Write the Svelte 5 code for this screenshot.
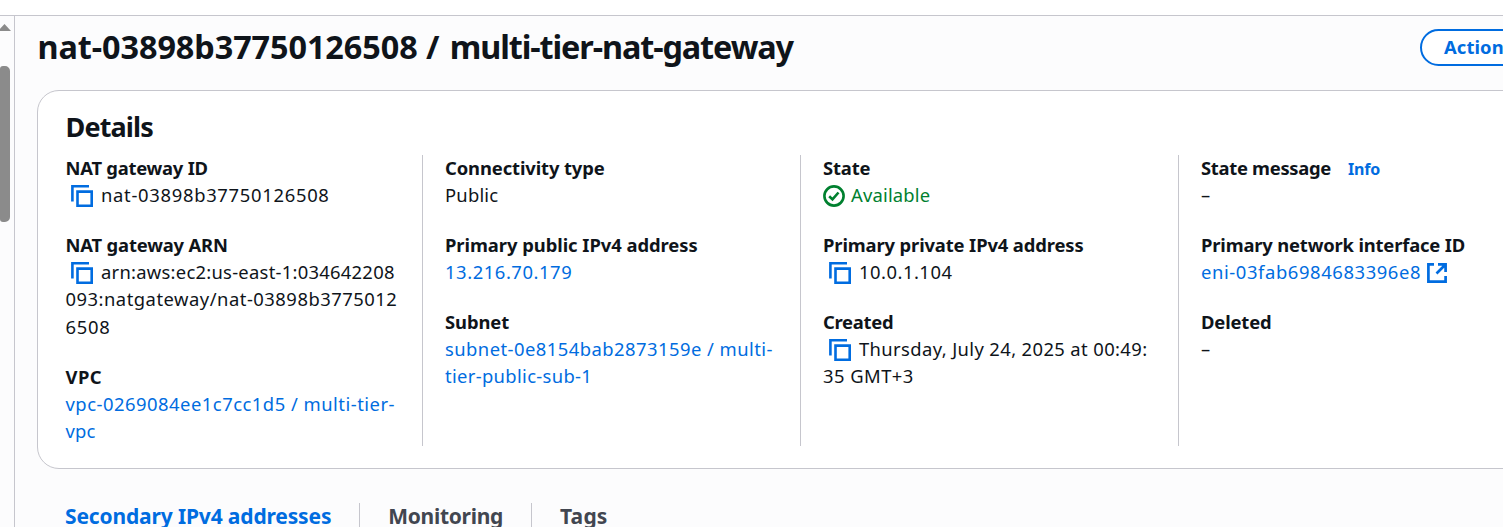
<script>
  // Each text is [content, letter-spacing in px].
  const columns = [
    [
      { label: ['NAT gateway ID', -0.24], icon: 'copy', lines: [['nat-03898b37750126508', 0.7]] },
      {
        label: ['NAT gateway ARN', -0.17],
        icon: 'copy',
        lines: [['arn:aws:ec2:us-east-1:034642208', 0.26], ['093:natgateway/nat-03898b3775012', 0.5], ['6508', 0.7]]
      },
      { label: ['VPC', 0.5], link: true, lines: [['vpc-0269084ee1c7cc1d5 / multi-tier-', 0.5], ['vpc', 0.2]] }
    ],
    [
      { label: ['Connectivity type', -0.11], lines: [['Public', 0.2]] },
      { label: ['Primary public IPv4 address', -0.05], link: true, lines: [['13.216.70.179', 0.56]] },
      { label: ['Subnet', -0.1], link: true, lines: [['subnet-0e8154bab2873159e / multi-', 0.46], ['tier-public-sub-1', 0.34]] }
    ],
    [
      { label: ['State', -0.16], icon: 'ok', lines: [['Available', 0.19]] },
      { label: ['Primary private IPv4 address', -0.13], icon: 'copy', lines: [['10.0.1.104', 0.5]] },
      { label: ['Created', -0.27], icon: 'copy', lines: [['Thursday, July 24, 2025 at 00:49:', 0.38], ['35 GMT+3', 0.45]] }
    ],
    [
      { label: ['State message', -0.3], info: true, lines: [['–', 0]] },
      { label: ['Primary network interface ID', -0.17], link: true, external: true, lines: [['eni-03fab6984683396e8', 0.6]] },
      { label: ['Deleted', -0.15], lines: [['–', 0]] }
    ]
  ];
  const tabs = [['Secondary IPv4 addresses', -0.15], ['Monitoring', -0.3], ['Tags', 0.2]];
</script>

<div class="page">
  <div class="topbar"></div>
  <div class="body">
    <aside>
      <svg class="arrow" width="11" height="7" viewBox="0 0 11 7"><path d="M-2 7 4.5 0 11 7z" fill="#8b8b8b" /></svg>
      <div class="thumb"></div>
    </aside>
    <main>
      <header>
        <h1><span class="id">nat-03898b37750126508 /</span> <span class="name">multi-tier-nat-gateway</span></h1>
        <button>Actions</button>
      </header>
      <section class="card">
        <h2>Details</h2>
        <div class="grid">
          {#each columns as col}
            <div class="col">
              {#each col as f}
                <div class="field">
                  <div class="label"><span style:letter-spacing="{f.label[1]}px">{f.label[0]}</span>{#if f.info}<span class="info">Info</span>{/if}</div>
                  {#each f.lines as line, i}
                    <div class="value" class:link={f.link} class:ok={f.icon === 'ok'}>
                      {#if i === 0 && f.icon === 'copy'}
                        <svg class="copy" width="22" height="22" viewBox="0 0 22 22" fill="none" stroke="#006ce0" stroke-width="2.6">
                          <path d="M1.4 16.4V1.3H18" /><path d="M6.5 6.6h14.2v14.1H6.5z" />
                        </svg>
                      {:else if i === 0 && f.icon === 'ok'}
                        <svg class="check" width="22" height="22" viewBox="0 0 22 22" fill="none" stroke="#00802f" stroke-width="2.6">
                          <circle cx="11" cy="11" r="9.6" /><path d="M6.2 11.2l3.3 3.2 6-6.9" />
                        </svg>
                      {/if}
                      <span style:letter-spacing="{line[1]}px">{line[0]}</span>
                      {#if f.external}
                        <svg class="ext" width="20" height="20" viewBox="0 0 20 20" fill="none" stroke="#006ce0" stroke-width="2.7">
                          <path d="M7 1.4H1.4v17.2h17.2V13" /><path d="M11 1.4h7.6V9M18.5 1.5 9.5 10.5" />
                        </svg>
                      {/if}
                    </div>
                  {/each}
                </div>
              {/each}
            </div>
          {/each}
        </div>
      </section>
      <nav>
        {#each tabs as t, i}
          <div class="tab" class:active={i === 0}><span style:letter-spacing="{t[1]}px">{t[0]}</span></div>
        {/each}
      </nav>
    </main>
  </div>
</div>

<style>
  :global(body) { overflow: hidden; }
  .page {
    width: 1503px; height: 527px; overflow: hidden; display: flex; flex-direction: column;
    background: #fcfcfd; color: #0f141a; font: 18.4px/27.5px 'Noto Sans', 'Open Sans', sans-serif;
    white-space: nowrap;
  }
  .topbar { height: 15px; flex: none; background: #fff; border-bottom: 1px solid #c6c6cd; }
  .body { flex: 1; display: flex; min-height: 0; }
  aside { width: 14px; flex: none; border-right: 1px solid #c6c6cd; display: flex; flex-direction: column; }
  .arrow { margin-top: 8px; flex: none; }
  .thumb { margin-top: 35px; width: 10px; height: 156px; background: #8b8b8b; border-radius: 3px 5px 5px 3px; flex: none; }
  main { flex: none; width: 1560px; padding-left: 22px; display: flex; flex-direction: column; }
  header { height: 74px; flex: none; display: flex; justify-content: space-between; }
  h1 { margin: 10px 0 0 0.5px; font-size: 32.4px; line-height: 41px; font-weight: 700; }
  .id { letter-spacing: -0.08px; }
  .name { letter-spacing: -1.1px; margin-left: 2px; }
  button {
    box-sizing: border-box; width: 150px; height: 37px; margin: 13px 27px 0 0; padding: 0 0 2px 22px; text-align: left;
    border: 2px solid #006ce0; border-radius: 19px; background: #fff; color: #006ce0;
    font: 700 18.4px/31px 'Noto Sans', sans-serif; letter-spacing: 0.1px;
  }
  .card {
    box-sizing: border-box; height: 379px; flex: none; border: 1px solid #c6c6cd; border-radius: 22px;
    background: #fff; padding: 19px 0 0;
  }
  h2 { margin: 0 0 12px 27.5px; font-size: 27px; line-height: 33px; font-weight: 700; letter-spacing: -0.85px; }
  .grid { display: flex; height: 291px; }
  .col { box-sizing: border-box; width: 378px; border-left: 1px solid #c6c6cd; padding-left: 22px; display: flex; flex-direction: column; gap: 22px; }
  .col:first-child { width: 384px; border: 0; padding-left: 27.5px; }
  .label, .value { height: 27.5px; display: flex; align-items: center; }
  .label { font-weight: 700; }
  .label span { margin-top: -2.5px; }
  .value span { margin-top: -3.5px; }
  .label .info { font-size: 16px; letter-spacing: -0.2px; color: #006ce0; margin: 1px 0 0 17px; }
  .link { color: #006ce0; }
  .ok { color: #00802f; }
  svg { flex: none; }
  .copy { margin: 0 8px 0 5.5px; }
  .col:nth-child(3) .copy { margin-left: 6px; }
  .check { margin-right: 6px; }
  .ext { margin-left: 6px; }
  nav { display: flex; margin-top: 34px; height: 40px; }
  .tab { font-size: 21px; font-weight: 700; color: #424650; padding: 0 28px; border-left: 1px solid #c6c6cd; }
  .tab:first-child { border: 0; }
  .active { color: #006ce0; }
</style>
